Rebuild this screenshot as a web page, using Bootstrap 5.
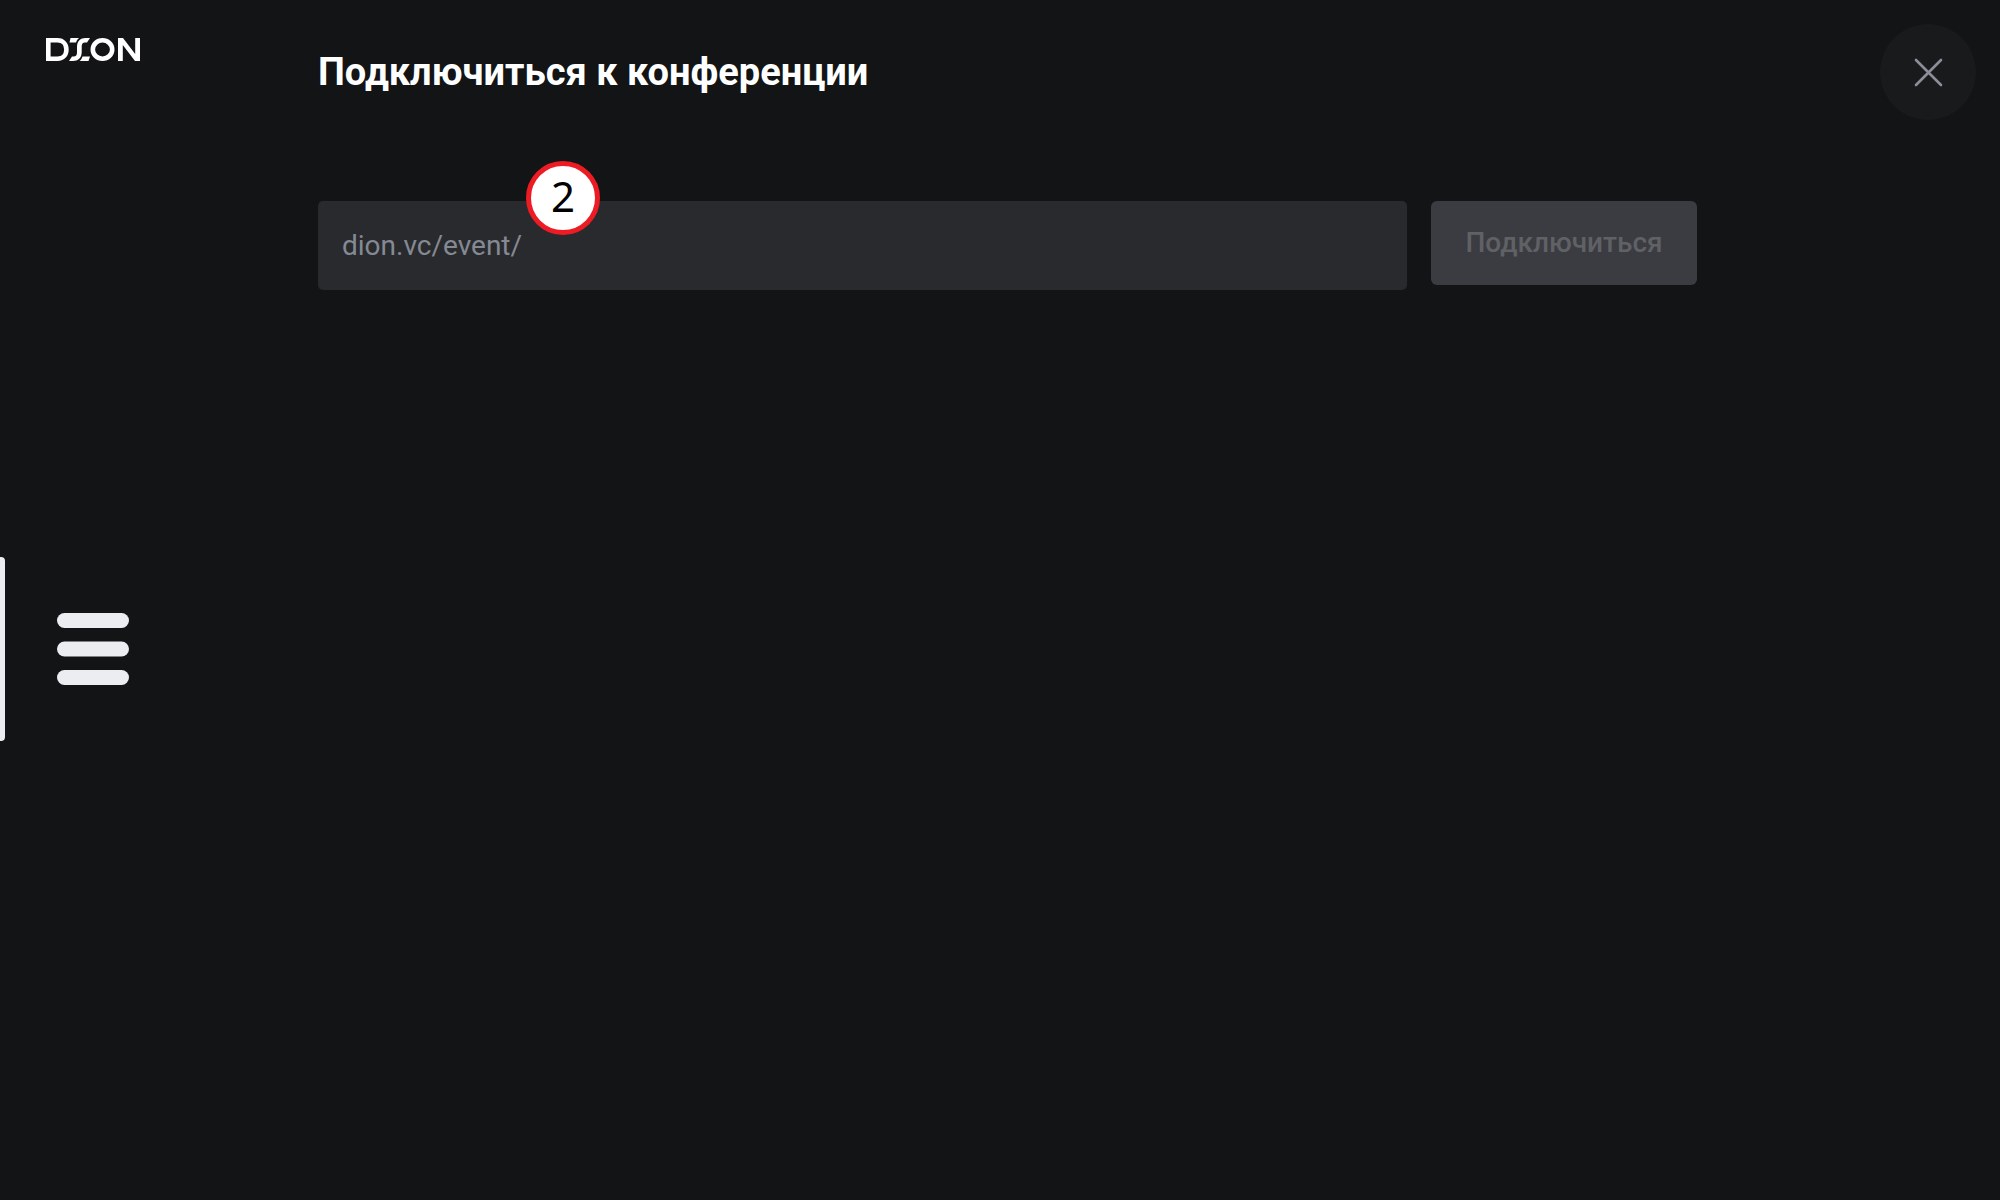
<!DOCTYPE html>
<html lang="ru" data-bs-theme="dark">
<head>
<meta charset="utf-8">
<meta name="viewport" content="width=device-width, initial-scale=1">
<title>DION</title>
<link href="https://cdn.jsdelivr.net/npm/bootstrap@5.3.0/dist/css/bootstrap.min.css" rel="stylesheet">
<style>
  body { background: #121416; color: #fff; font-family: Roboto, sans-serif; }
  .side { width: 186px; flex: none; }
  .brand { padding: 38px 46px; }
  .side-nav { margin-bottom: 459px; gap: 52px; }
  .rail { width: 5px; height: 184px; background: #ecedf1; border-radius: 0 4px 4px 0; }
  .stage { padding: 24px 24px 0 132px; }
  .title { font-size: 38px; line-height: 48px; font-weight: 700; }
  .close-btn { width: 96px; height: 96px; background: #191a1c; color: #8b8e99; }
  .join { margin-top: 81px; margin-right: 279px; gap: 24px; }
  .room, .room:focus { height: 89px; background: #292a2e; border: 0; border-radius: 5px; padding: 0 24px; color: #fff; font-size: 28px; }
  .room::placeholder { color: #858993; }
  .go { width: 266px; height: 84px; flex: none; border: 0; border-radius: 6px; font-size: 28px; font-weight: 500; }
  .go:disabled { background: #3b3c41; color: #606165; opacity: 1; }
  .step { left: 208px; top: -40px; width: 74px; height: 74px; border: 5px solid #ed1c24; background: #fff; color: #000; font: 42px/60px "Noto Sans", sans-serif; }
</style>
<script src="https://cdn.jsdelivr.net/npm/bootstrap@5.3.0/dist/js/bootstrap.bundle.min.js"></script>
</head>
<body>
<div class="d-flex min-vh-100">
  <aside class="side d-flex flex-column justify-content-between">
    <a class="brand d-block" href="#" aria-label="DION">
      <svg class="d-block" width="94" height="23" viewBox="0 0 94 23" fill="none" stroke="#fff" stroke-width="4.6">
        <path d="M2.3 2.3H11.5C17.2 2.3 20.4 6.300 20.4 11.500S17.200 20.700 11.500 20.700H2.300Z"/>
        <g fill="#fff" stroke="none">
          <path d="M24.500 0H33C31.500 1.200 30.500 2.800 30 4.600H23.500Z"/>
          <path d="M44 0L41 4.600H39C36.800 4.600 35.700 6 35.700 8.500V14C35.700 20 32 23 27 23H23L26 18.400H27.500C30 18.400 31 17 31 14.500V9C31 3 34.500 0 39.500 0Z"/>
          <path d="M36.500 18.400H44L42.500 23H33.500C35 21.800 36 20.200 36.500 18.400Z"/>
        </g>
        <circle cx="56.500" cy="11.500" r="12.800" fill="#121416" stroke="none"/>
        <ellipse cx="56.500" cy="11.500" rx="9.700" ry="9.200"/>
        <path d="M72 23V0H77L89.200 16V0H94V23H89L76.800 7V23Z" fill="#fff" stroke="none"/>
      </svg>
    </a>
    <nav class="side-nav d-flex align-items-center">
      <span class="rail"></span>
      <button type="button" class="btn border-0 p-0" aria-label="Меню">
        <svg class="d-block" width="72" height="72" viewBox="0 0 72 72" fill="#ecedf1">
          <rect width="72" height="15" rx="7.500" y="0"/><rect y="28.500" width="72" height="15" rx="7.500"/><rect y="57" width="72" height="15" rx="7.500"/>
        </svg>
      </button>
    </nav>
  </aside>
  <main class="stage flex-grow-1">
    <header class="d-flex justify-content-between align-items-center">
      <h1 class="title mb-0">Подключиться к конференции</h1>
      <button type="button" class="btn close-btn border-0 p-0 rounded-circle d-flex align-items-center justify-content-center" aria-label="Закрыть">
        <svg width="30" height="30" viewBox="0 0 30 30" stroke="currentColor" stroke-width="2.600" stroke-linecap="round"><path d="M3 3L28 28M28 3L3 28"/></svg>
      </button>
    </header>
    <form class="join d-flex align-items-start position-relative">
      <input class="form-control room shadow-none" type="text" aria-label="Адрес конференции" placeholder="dion.vc/event/">
      <button class="btn go" type="submit" disabled>Подключиться</button>
      <span class="step position-absolute rounded-circle text-center">2</span>
    </form>
  </main>
</div>
</body>
</html>
